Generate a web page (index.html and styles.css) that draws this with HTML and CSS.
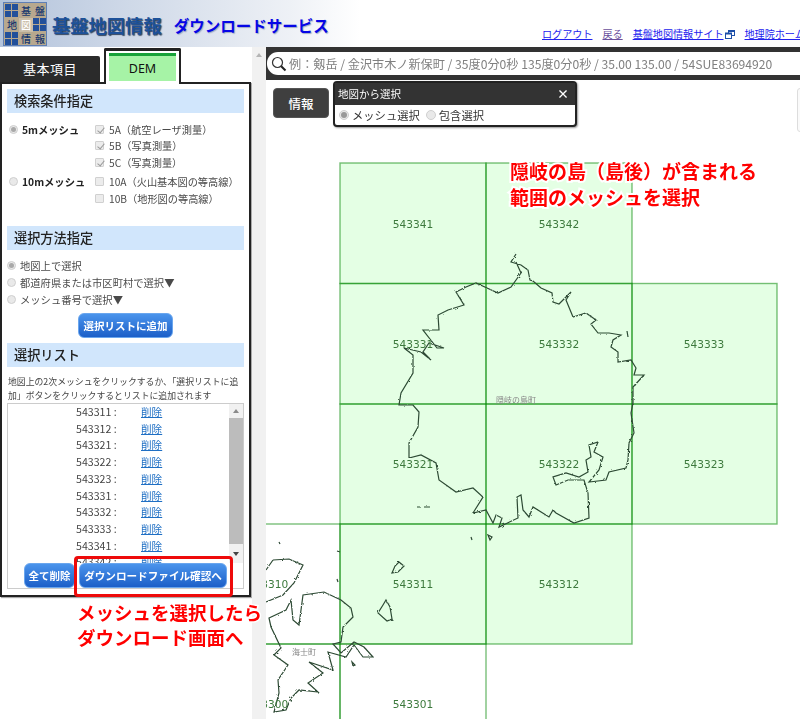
FILE: index.html
```html
<!DOCTYPE html>
<html lang="ja">
<head>
<meta charset="utf-8">
<title>基盤地図情報 ダウンロードサービス</title>
<link rel="stylesheet" href="styles.css">
</head>
<body>
<div class="page">
  <header class="header">
    <div class="logo">
      <span class="logo-blue"></span><span class="logo-cell">基</span><span class="logo-cell">盤</span>
      <span class="logo-cell">地</span><span class="logo-cell logo-center">図</span><span class="logo-blue"></span>
      <span class="logo-blue"></span><span class="logo-cell">情</span><span class="logo-cell">報</span>
    </div>
    <div class="title-main">基盤地図情報</div>
    <div class="title-sub">ダウンロードサービス</div>
    <nav class="nav">
      <a class="nav-link">ログアウト</a>
      <a class="nav-link nav-visited">戻る</a>
      <a class="nav-link nav-ext">基盤地図情報サイト<svg class="ext-icon" viewBox="0 0 10 9" width="10" height="9"><rect x="3.5" y="0.5" width="6" height="5" fill="#fff" stroke="#1d4fa8"/><rect x="3.5" y="0.5" width="6" height="1.5" fill="#1d4fa8"/><rect x="0.5" y="3" width="6" height="5.5" fill="#fff" stroke="#1d4fa8"/><rect x="0.5" y="3" width="6" height="1.5" fill="#1d4fa8"/></svg></a>
      <a class="nav-link nav-last">地理院ホームページ</a>
    </nav>
  </header>

  <main class="main">
    <aside class="aside">
      <div class="side-col">
        <div class="tabs">
          <div class="tab">基本項目</div>
          <div class="tab-active"><div class="tab-active-inner">DEM</div></div>
        </div>
        <div class="panel">
          <h2 class="sec-title">検索条件指定</h2>
          <div class="mesh-group mesh-first">
            <div class="mesh-name"><span class="radio radio-on"></span>5mメッシュ</div>
            <div class="mesh-opts">
              <div class="opt"><span class="check check-on"></span>5A（航空レーザ測量）</div>
              <div class="opt"><span class="check check-on"></span>5B（写真測量）</div>
              <div class="opt"><span class="check check-on"></span>5C（写真測量）</div>
            </div>
          </div>
          <div class="mesh-group mesh-second">
            <div class="mesh-name"><span class="radio"></span>10mメッシュ</div>
            <div class="mesh-opts">
              <div class="opt"><span class="check"></span>10A（火山基本図の等高線）</div>
              <div class="opt"><span class="check"></span>10B（地形図の等高線）</div>
            </div>
          </div>

          <h2 class="sec-title sec-method">選択方法指定</h2>
          <div class="methods">
            <div class="method"><span class="radio radio-on"></span>地図上で選択</div>
            <div class="method"><span class="radio"></span>都道府県または市区町村で選択▼</div>
            <div class="method"><span class="radio"></span>メッシュ番号で選択▼</div>
          </div>
          <div class="add-wrap"><button class="btn btn-add">選択リストに追加</button></div>

          <h2 class="sec-title sec-list">選択リスト</h2>
          <p class="note">地図上の2次メッシュをクリックするか、「選択リストに追加」ボタンをクリックするとリストに追加されます</p>
          <div class="listbox">
            <div class="list-top">
              <ul class="list">
                <li class="row"><span class="code">543311 :</span><a class="del">削除</a></li>
                <li class="row"><span class="code">543312 :</span><a class="del">削除</a></li>
                <li class="row"><span class="code">543321 :</span><a class="del">削除</a></li>
                <li class="row"><span class="code">543322 :</span><a class="del">削除</a></li>
                <li class="row"><span class="code">543323 :</span><a class="del">削除</a></li>
                <li class="row"><span class="code">543331 :</span><a class="del">削除</a></li>
                <li class="row"><span class="code">543332 :</span><a class="del">削除</a></li>
                <li class="row"><span class="code">543333 :</span><a class="del">削除</a></li>
                <li class="row"><span class="code">543341 :</span><a class="del">削除</a></li>
                <li class="row"><span class="code">543342 :</span><a class="del">削除</a></li>
              </ul>
              <div class="sbar"><span class="arrow-up"></span><span class="sbar-thumb"></span><span class="arrow-down"></span></div>
            </div>
            <div class="list-btns">
              <button class="btn btn-clear">全て削除</button>
              <button class="btn btn-dl">ダウンロードファイル確認へ</button>
            </div>
          </div>
        </div>
      </div>
      <div class="page-sbar"><span class="arrow-up arrow-pale"></span></div>
      <div class="red-frame"></div>
      <div class="note-left">メッシュを選択したら<br>ダウンロード画面へ</div>
    </aside>

    <section class="map">
      <svg class="map-svg" viewBox="266 47 534 672" width="534" height="672" xmlns="http://www.w3.org/2000/svg">
        <defs>
          <filter id="rough" filterUnits="userSpaceOnUse" x="260" y="240" width="420" height="480">
            <feTurbulence type="fractalNoise" baseFrequency="0.35" numOctaves="2" seed="4"/>
            <feDisplacementMap in="SourceGraphic" scale="2.5"/>
          </filter>
        </defs>
        <g class="cell-on">
          <rect x="340" y="163" width="146" height="120.5"/><rect x="486" y="163" width="146" height="120.5"/>
          <rect x="340" y="283.5" width="146" height="120.5"/><rect x="486" y="283.5" width="146" height="120.5"/><rect x="632" y="283.5" width="145" height="120.5"/>
          <rect x="340" y="404" width="146" height="120"/><rect x="486" y="404" width="146" height="120"/><rect x="632" y="404" width="145" height="120"/>
          <rect x="340" y="524" width="146" height="120"/><rect x="486" y="524" width="146" height="120"/>
        </g>
        <g class="cell-off">
          <rect x="194" y="524" width="146" height="120"/><rect x="194" y="644" width="146" height="120"/><rect x="340" y="644" width="146" height="120"/>
        </g>
        <g class="coast" filter="url(#rough)">
          <path d="M516 254L511 262L521 265L528 270L530 280L533 281L541 288L552 293L553 302L559 304L571 292L566 300L573 317L586 313L596 320L591 324L598 333L609 333L621 335L613 340L611 347L618 352L618 362L631 360L636 368L634 375L644 375L633 387L633 403L631 413L634 433L629 443L628 460L626 468L609 472L606 480L589 482L599 470L603 457L594 452L598 442L589 445L591 457L586 460L588 472L579 477L566 473L553 477L556 485L568 480L584 480L588 493L589 518L574 523L556 513L553 510L549 517L533 507L529 517L523 510L521 495L517 497L518 518L499 527L502 518L496 515L493 523L486 510L473 513L483 497L473 488L456 492L439 480L436 463L421 455L409 458L409 443L418 427L419 412L413 405L399 405L401 393L413 373L413 355L404 348L421 352L431 360L423 352L429 343L444 348L437 348L423 330L439 330L438 315L448 310L464 305L456 292L466 287L476 283L487 288L498 293L511 287L521 273L516 262"/>
          <path d="M273 560L289 559L303 565L294 583L283 595L266 602M266 570L273 560"/>
          <path d="M269 618L286 610L291 600L293 620L299 625L303 595L324 592L341 600L351 608L353 617L343 627L341 642L333 644L341 653L354 642L364 647L373 657L363 657L354 645L346 657L328 652L333 670L309 662L323 673L308 683L318 692L299 690L291 698L286 710L274 712L279 693L278 680L288 665L274 655L281 648L271 627Z"/>
          <path d="M399 562L404 566L398 572L392 573L395 566Z"/>
          <path d="M386 600L390 607L392 619L387 621L378 613L383 605Z"/>
          <path d="M279 542L280 544M337 551L340 552M337 579L338 582M352 662L355 665L353 666ZM471 537L472 540M488 535L490 540L492 537ZM417 507L421 507M424 507L430 507M627 331L628 337"/>
        </g>
        <g class="cell-label">
          <text x="413" y="228">543341</text><text x="559" y="228">543342</text>
          <text x="413" y="348">543331</text><text x="559" y="348">543332</text><text x="704" y="348">543333</text>
          <text x="413" y="468">543321</text><text x="559" y="468">543322</text><text x="704" y="468">543323</text>
          <text x="268" y="588">543310</text><text x="413" y="588">543311</text><text x="559" y="588">543312</text>
          <text x="268" y="708">543300</text><text x="413" y="708">543301</text>
        </g>
        <g class="town">
          <text x="516" y="403">隠岐の島町</text><text x="304" y="655">海士町</text>
        </g>
      </svg>

      <div class="search">
        <div class="search-box">
          <svg class="search-icon" viewBox="0 0 16 16" width="16" height="16"><circle cx="6.5" cy="6.5" r="5" fill="none" stroke="#333" stroke-width="1.2"/><path d="M10.2 10.2L14.5 14.5" stroke="#222" stroke-width="2"/></svg>
          <span class="search-text">例：剱岳 / 金沢市木ノ新保町 / 35度0分0秒 135度0分0秒 / 35.00 135.00 / 54SUE83694920</span>
        </div>
      </div>
      <button class="info-btn">情報</button>
      <div class="popup">
        <div class="popup-head"><span>地図から選択</span><span class="popup-x">×</span></div>
        <div class="popup-body"><span class="radio radio-on radio-lg"></span><span class="popup-opt">メッシュ選択</span><span class="radio radio-lg"></span><span>包含選択</span></div>
      </div>
      <div class="edge-btn"></div>
      <div class="note-map">隠岐の島（島後）が含まれる<br>範囲のメッシュを選択</div>
    </section>
  </main>
</div>
</body>
</html>
```

FILE: styles.css
```css
* { box-sizing: border-box; }
html, body { margin: 0; padding: 0; background: #fff; }
.page {
  width: 800px; height: 719px; overflow: hidden;
  display: flex; flex-direction: column;
  font-family: "Noto Sans CJK JP", "Liberation Sans", sans-serif;
  color: #333;
  filter: blur(0.35px);
}

/* header */
.header {
  height: 47px; display: flex; align-items: flex-start;
  background: linear-gradient(90deg, #b4c4dc 0, #cfd9e8 130px, #eef1f6 290px, #fff 360px);
}
.logo {
  width: 44px; height: 44px; margin: 2px 0 0 3px; padding: 1px;
  display: grid; grid-template-columns: repeat(3, 14px); grid-template-rows: repeat(3, 14px);
  background: #b7a88e; border: 1px solid #5f7fb5; flex: none; overflow: hidden;
}
.logo-blue {
  background-color: #23509a;
  background-image: linear-gradient(90deg, transparent 6px, #b7a88e 6px, #b7a88e 7px, transparent 7px), linear-gradient(transparent 6px, #b7a88e 6px, #b7a88e 7px, transparent 7px);
  margin: 0 1px 1px 0;
}
.logo-cell { font-size: 10px; line-height: 14px; height: 14px; overflow: hidden; text-align: center; color: #17386e; font-weight: 500; }
.logo-center { color: #fff; background: #c9bda8; }
.title-main {
  margin: 13px 0 0 5px; font-size: 18.3px; line-height: 24px; font-weight: 700; color: #1d5199;
  text-shadow: 1px 1px 1px #35465f; white-space: nowrap;
}
.title-sub {
  margin: 13px 0 0 12px; font-size: 15.5px; line-height: 24px; font-weight: 700; color: #0606e6;
  text-shadow: 1px 1px 1px #9fa9c4; white-space: nowrap;
}
.nav { margin: 27px 0 0 auto; display: flex; gap: 10px; font-size: 10.1px; line-height: 14px; width: 258px; white-space: nowrap; flex: none; overflow: hidden; }
.nav-link { color: #2222ee; text-decoration: underline; flex: none; }
.nav-visited { color: #6a4f9c; }
.nav-ext { display: flex; align-items: center; gap: 1px; }
.ext-icon { flex: none; }

/* aside */
.main { flex: 1; display: flex; min-height: 0; }
.aside { width: 266px; flex: none; display: flex; position: relative; }
.side-col { width: 252px; flex: none; }
.page-sbar { width: 14px; background: #f1f1f1; display: flex; flex-direction: column; align-items: center; padding-top: 6px; }
.tabs { height: 37px; display: flex; align-items: flex-end; position: relative; z-index: 1; margin-bottom: -2px; padding-top: 1px; }
.tab {
  width: 100px; height: 26px; background: #2b2b2b; color: #fff; font-size: 13px; line-height: 25px;
  text-align: center; letter-spacing: .5px; border-radius: 0 2px 0 0; margin-bottom: 2px;
}
.tab-active {
  width: 77px; height: 36px; margin-left: 4px; padding: 2px 3px 0;
  border: 2px solid #222; border-top-width: 3px; border-bottom: 0; border-radius: 2px 2px 0 0; background: #fff;
}
.tab-active-inner {
  height: 28px; background: #a6f3a6; border-top: 3px solid #17a238; color: #111;
  font-size: 12.5px; line-height: 25px; text-align: center;
  font-family: "Noto Sans", sans-serif;
}
.panel { width: 251px; height: 515px; border: 2px solid #222; background: #fff; padding: 5px 5px 0; box-shadow: 1px 1px 1px #aaa; }
.sec-title {
  margin: 0; height: 24px; padding-left: 7px; background: #d1e6fc; color: #222;
  font-size: 13.2px; line-height: 23px; font-weight: 500; letter-spacing: 0;
}
.sec-method { margin-top: 19px; }
.sec-list { margin-top: 5px; }

.radio {
  display: inline-block; width: 9px; height: 9px; border-radius: 50%; background: #e9e9e9;
  border: 1px solid #cfcfcf; flex: none; position: relative;
}
.radio-on::after {
  content: ""; position: absolute; left: 1px; top: 1px; width: 5px; height: 5px; border-radius: 50%; background: #a9a9a9;
}
.radio-lg { width: 10px; height: 10px; }
.radio-lg.radio-on::after { width: 6px; height: 6px; background: #999; }
.check {
  display: inline-block; width: 9px; height: 9px; background: #ececec; border: 1px solid #d0d0d0; border-radius: 1px;
  flex: none; margin-right: 5px; position: relative;
}
.check-on::after {
  content: ""; position: absolute; left: 2.5px; top: 0; width: 3px; height: 6px;
  border: solid #999; border-width: 0 1.5px 1.5px 0; transform: rotate(40deg);
}
.mesh-group { display: flex; padding-left: 2px; }
.mesh-first { margin-top: 8px; }
.mesh-second { margin-top: 3px; }
.mesh-name { width: 86px; height: 16.5px; display: flex; align-items: center; gap: 4px; font-size: 10.3px; font-weight: 700; color: #222; white-space: nowrap; flex: none; }
.mesh-opts { display: flex; flex-direction: column; }
.opt { height: 16.5px; display: flex; align-items: center; font-size: 10.2px; color: #4a4a4a; white-space: nowrap; }

.methods { margin-top: 8px; display: flex; flex-direction: column; }
.method { height: 16.7px; display: flex; align-items: center; gap: 4px; font-size: 10.3px; color: #4a4a4a; white-space: nowrap; }
.add-wrap { margin-top: 5.5px; padding-left: 71px; }
.btn {
  border: 1px solid #6aa6ee; border-radius: 6px; color: #fff; font-weight: 700; padding: 0; cursor: pointer;
  font-family: inherit; background: linear-gradient(#4a94ec, #1c5fc8); white-space: nowrap;
}
.btn-add { width: 95px; height: 25px; font-size: 10.5px; display: block; }
.note { margin: 8px 0 0 1px; font-size: 8.85px; line-height: 13.5px; color: #444; height: 28px; }
.listbox { width: 237px; height: 186px; border: 1px solid #ccc; display: flex; flex-direction: column; background: #fff; }
.list-top { height: 159px; display: flex; overflow: hidden; }
.list { list-style: none; margin: 0; padding: 0; flex: 1; }
.row { height: 16.7px; display: flex; font-size: 10.6px; line-height: 16.7px; color: #444; }
.code { width: 115px; padding-left: 68px; white-space: nowrap; flex: none; }
.del { color: #1f6fc4; text-decoration: underline; margin-left: 18px; }
.sbar { width: 14px; background: #f1f1f1; display: flex; flex-direction: column; align-items: center; padding-top: 5px; flex: none; }
.sbar-thumb { width: 14px; height: 126px; background: #bcbcbc; margin: 5px 0 8px; flex: none; }
.arrow-up { width: 0; height: 0; border: 3.5px solid transparent; border-top: 0; border-bottom: 4px solid #8a8a8a; flex: none; }
.arrow-down { width: 0; height: 0; border: 3.5px solid transparent; border-bottom: 0; border-top: 4px solid #444; flex: none; }
.arrow-pale { border-bottom-color: #b5b5b5; }
.list-btns { display: flex; gap: 4px; padding-left: 16px; }
.btn-clear { width: 51px; height: 25px; font-size: 10.5px; }
.btn-dl { width: 148px; height: 25px; font-size: 10.6px; }
.red-frame {
  position: absolute; left: 74px; top: 509px; width: 159px; height: 41px;
  border: 3px solid #ee0a0a; border-radius: 4px;
}
.note-left {
  position: absolute; left: 77px; top: 553px; font-size: 18.5px; line-height: 25px; font-weight: 700; color: #f00;
  white-space: nowrap; paint-order: stroke fill; -webkit-text-stroke: 3px #fff;
}

/* map */
.map { flex: 1; position: relative; overflow: hidden; background: #fff; }
.map-svg { position: absolute; left: 0; top: 0; display: block; }
.cell-on rect { fill: #00ff00; fill-opacity: .105; stroke: #0b8a0b; stroke-opacity: .55; stroke-width: 1.4; }
.cell-off rect { fill: none; stroke: #0b8a0b; stroke-opacity: .55; stroke-width: 1.4; }
.coast path { fill: none; stroke: #2d4a34; stroke-width: 1.2; }
.cell-label text { font-family: "DejaVu Sans", sans-serif; font-size: 10.6px; fill: #3d7a3d; text-anchor: middle; }
.town text { font-family: "Noto Sans CJK JP", sans-serif; font-size: 8px; fill: #888; text-anchor: middle; }
.search { position: absolute; left: 0; top: 0; width: 100%; height: 33px; background: #333; padding: 5px 0 5px 1px; }
.search-box { height: 23px; background: #fff; border-radius: 11px 0 0 11px; display: flex; align-items: center; padding-left: 4px; gap: 2px; }
.search-icon { flex: none; }
.search-text { font-size: 12.15px; color: #808080; white-space: nowrap; }
.info-btn {
  position: absolute; left: 7px; top: 41px; width: 56px; height: 30px; border: 1px solid #555; border-radius: 4px;
  background: #3f3f3f; color: #fff; font-family: inherit; font-size: 12.5px; font-weight: 500; padding: 0;
}
.popup {
  position: absolute; left: 67px; top: 34px; width: 244px; height: 46px; background: #fff;
  border: 2px solid #222; border-radius: 4px; box-shadow: 1px 1px 2px #999; display: flex; flex-direction: column;
}
.popup-head { height: 22px; background: #333; color: #fff; font-size: 10.5px; line-height: 21px; padding: 0 6px 0 3px; display: flex; justify-content: space-between; }
.popup-x { font-weight: 700; font-size: 12px; }
.popup-body { flex: 1; display: flex; align-items: center; padding-left: 4px; font-size: 11.3px; gap: 3px; color: #333; }
.popup-opt { margin-right: 3px; }
.edge-btn { position: absolute; right: -5px; top: 41px; width: 8px; height: 44px; border: 1px solid #ddd; border-radius: 3px; background: #fafafa; }
.note-map {
  position: absolute; left: 244px; top: 111px; font-size: 19px; line-height: 26px; font-weight: 700; color: #f00;
  white-space: nowrap; paint-order: stroke fill; -webkit-text-stroke: 4px #fff;
}
```
